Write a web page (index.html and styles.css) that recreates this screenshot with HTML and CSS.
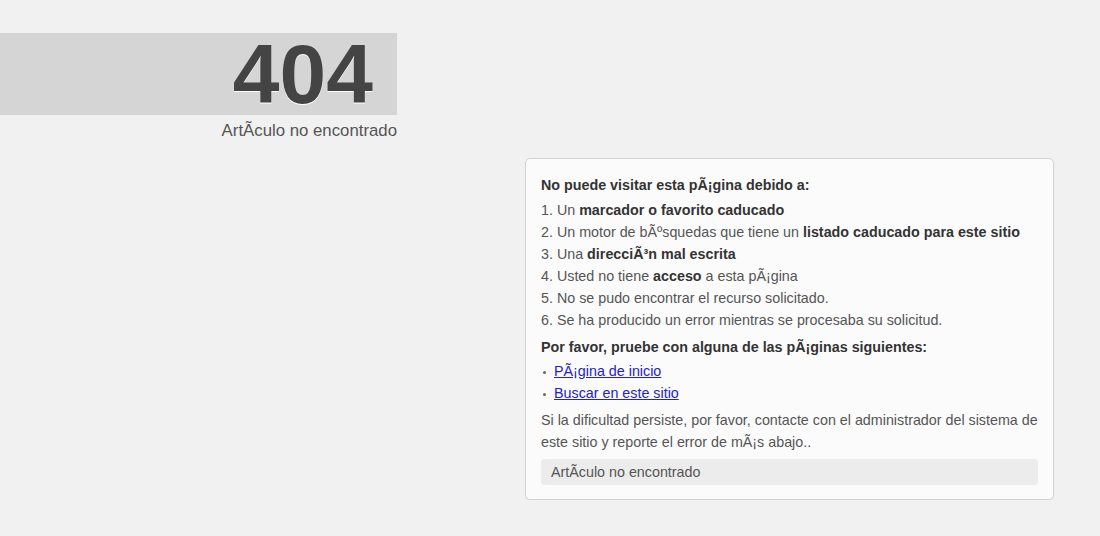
FILE: index.html
```html
<!DOCTYPE html>
<html lang="es">
<head>
<meta charset="utf-8">
<title>404 - ArtÃ­culo no encontrado</title>
<link rel="stylesheet" href="styles.css">
</head>
<body>
<div class="header">
  <div class="bar"><h1 class="code">404</h1></div>
  <p class="subtitle">ArtÃ&shy;culo no encontrado</p>
</div>
<div class="main">
  <div class="card">
    <p class="heading">No puede visitar esta pÃ¡gina debido a:</p>
    <ol class="reasons">
      <li>Un <strong>marcador o favorito caducado</strong></li>
      <li>Un motor de bÃºsquedas que tiene un <strong>listado caducado para este sitio</strong></li>
      <li>Una <strong>direcciÃ³n mal escrita</strong></li>
      <li>Usted no tiene <strong>acceso</strong> a esta pÃ¡gina</li>
      <li>No se pudo encontrar el recurso solicitado.</li>
      <li>Se ha producido un error mientras se procesaba su solicitud.</li>
    </ol>
    <p class="heading heading-next">Por favor, pruebe con alguna de las pÃ¡ginas siguientes:</p>
    <ul class="links">
      <li><a href="#">PÃ¡gina de inicio</a></li>
      <li><a href="#">Buscar en este sitio</a></li>
    </ul>
    <p class="note">Si la dificultad persiste, por favor, contacte con el administrador del sistema de este sitio y reporte el error de mÃ¡s abajo..</p>
    <div class="error">ArtÃ&shy;culo no encontrado</div>
  </div>
</div>
</body>
</html>
```
FILE: styles.css
```css
html, body {
  margin: 0;
  padding: 0;
  background: #f1f1f1;
  font-family: "Liberation Sans", Arial, sans-serif;
  color: #555;
}
.header {
  width: 397px;
  padding-top: 33px;
}
.bar {
  background: #d5d5d5;
  height: 82px;
  display: flex;
  justify-content: flex-end;
  padding-right: 24px;
}
.code {
  margin: 0;
  font-size: 84px;
  line-height: 82px;
  font-weight: bold;
  color: #444;
  text-shadow: 0 1px 0 #fff;
}
.subtitle {
  margin: 5px 0 0;
  text-align: right;
  font-size: 16.8px;
  line-height: 22px;
  color: #555;
}
.main {
  display: flex;
  justify-content: flex-end;
  padding: 16px 46px 0 0;
}
.card {
  width: 497px;
  background: #fbfbfc;
  border: 1px solid #d3d3d3;
  border-radius: 5px;
  padding: 15px 15px 14px;
  font-size: 14.3px;
  line-height: 22px;
  box-shadow: 0 1px 1px rgba(0,0,0,0.04);
}
strong {
  color: #333;
}
.heading {
  margin: 0 0 3px;
  font-weight: bold;
  color: #333;
}
.heading-next {
  margin: 5px 0 2px;
}
.reasons {
  margin: 0;
  padding: 0;
  list-style: none;
  counter-reset: r;
}
.reasons li {
  counter-increment: r;
}
.reasons li::before {
  content: counter(r) ". ";
}
.links {
  margin: 0;
  padding: 0 0 0 13px;
  list-style: none;
}
.links li {
  position: relative;
}
.links li::before {
  content: "";
  position: absolute;
  left: -11px;
  top: 11px;
  width: 3px;
  height: 3px;
  border-radius: 50%;
  background: #666;
}
.links a {
  color: #2222cc;
  text-decoration: underline;
}
.note {
  margin: 5px 0 6px;
}
.error {
  background: #ececec;
  border-radius: 4px;
  padding: 2px 10px;
  line-height: 22px;
}
```
